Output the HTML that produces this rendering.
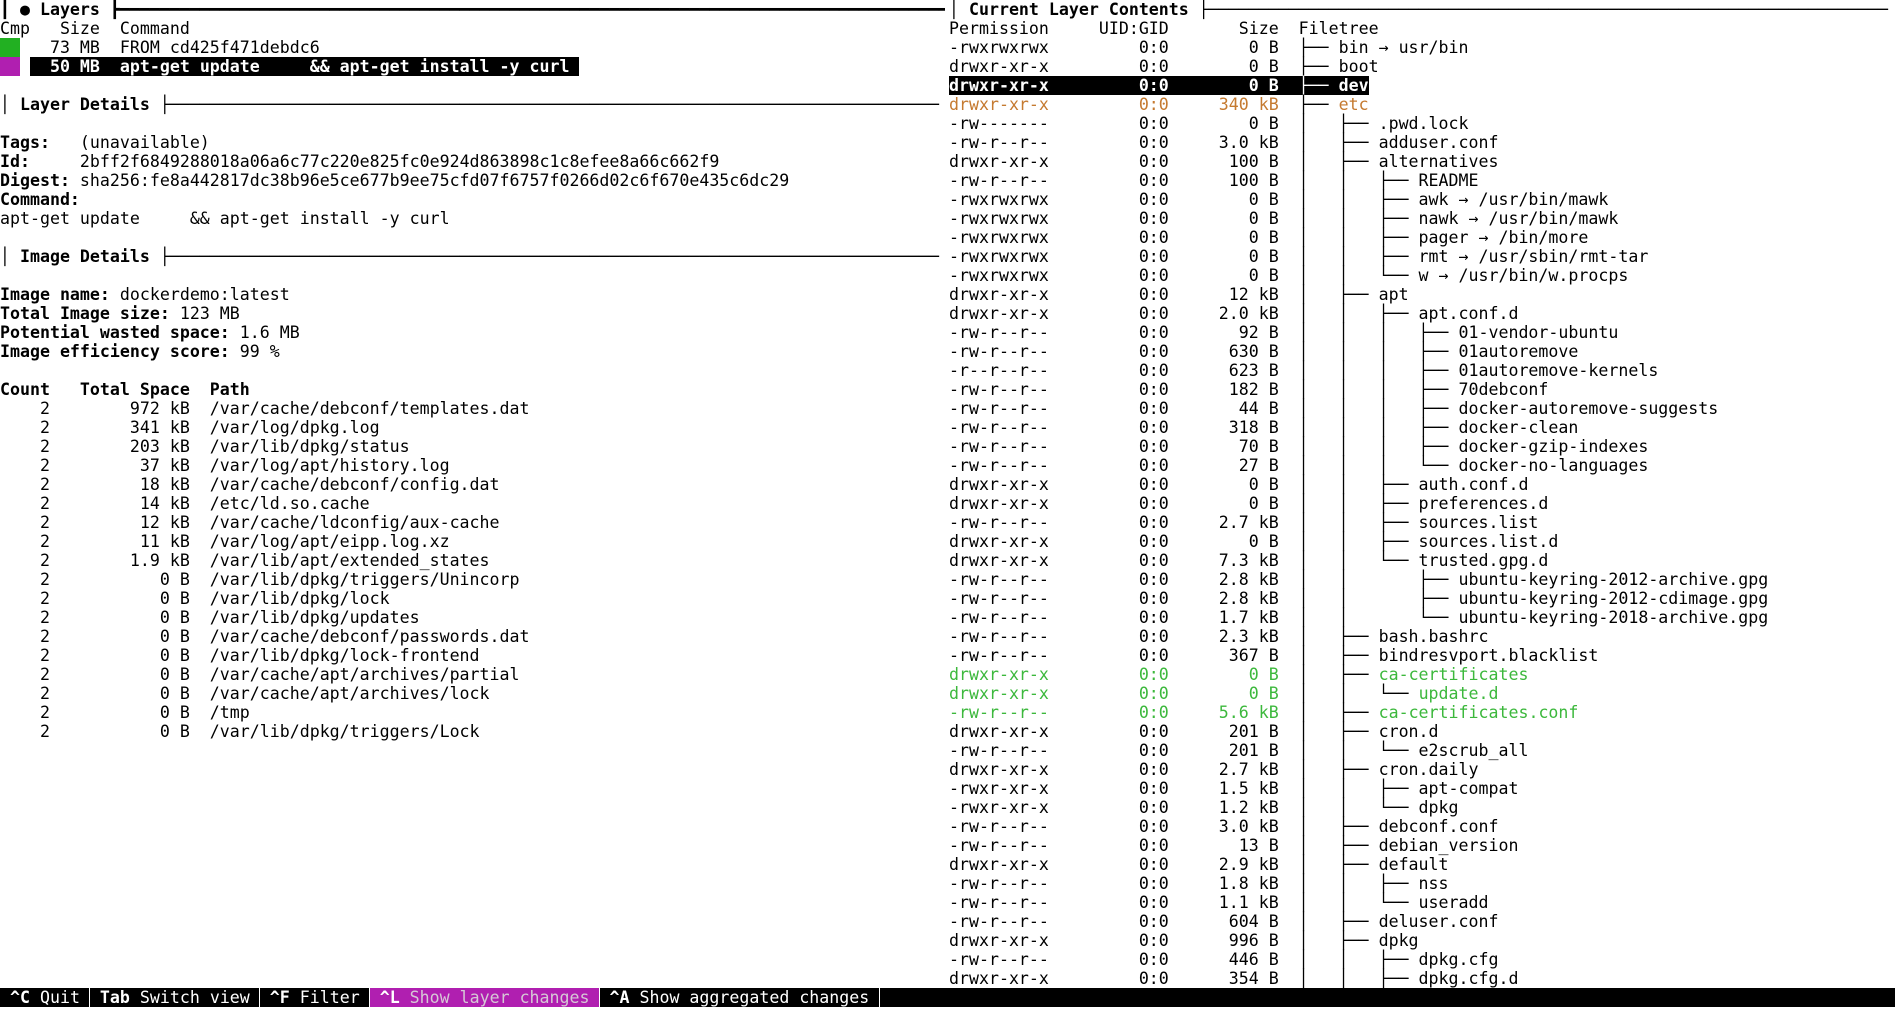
<!DOCTYPE html>
<html><head><meta charset="utf-8"><style>
html,body{margin:0;padding:0;background:#fff;}
body{width:1895px;height:1011px;overflow:hidden;position:relative;}
pre{margin:0;position:absolute;top:0;font-family:"DejaVu Sans Mono","Liberation Mono",monospace;font-size:16.6px;line-height:19px;color:#000;white-space:pre;overflow:hidden;}
#L{left:0;width:945px;}
#R{left:949px;width:946px;}
.g{background:#22b022;}
.m{background:#b01fb0;}
.sel{background:#000;color:#fff;font-weight:bold;}
.o{color:#c57a30;}
.gr{color:#3cb83c;}
#bar{position:absolute;left:0;top:988px;width:1895px;height:19px;background:#000;}
#bar pre{color:#fff;top:0;left:0;width:1895px;}
#bar .mg{background:#b01fb0;color:#d6c8d6;}
.sep{position:absolute;top:0;width:1px;height:19px;background:#fff;}
</style></head><body>
<pre id="L"><b>┃ ● Layers ┣━━━━━━━━━━━━━━━━━━━━━━━━━━━━━━━━━━━━━━━━━━━━━━━━━━━━━━━━━━━━━━━━━━━━━━━━━━━━━━━━━━━━━━━</b>
Cmp   Size  Command
<span class="g">  </span>   73 MB  FROM cd425f471debdc6
<span class="m">  </span> <span class="sel">  50 MB  apt-get update     &amp;&amp; apt-get install -y curl </span>

│ <b>Layer Details</b> ├─────────────────────────────────────────────────────────────────────────────

<b>Tags:</b>   (unavailable)
<b>Id:</b>     2bff2f6849288018a06a6c77c220e825fc0e924d863898c1c8efee8a66c662f9
<b>Digest:</b> sha256:fe8a442817dc38b96e5ce677b9ee75cfd07f6757f0266d02c6f670e435c6dc29
<b>Command:</b>
apt-get update     &amp;&amp; apt-get install -y curl

│ <b>Image Details</b> ├─────────────────────────────────────────────────────────────────────────────

<b>Image name:</b> dockerdemo:latest
<b>Total Image size:</b> 123 MB
<b>Potential wasted space:</b> 1.6 MB
<b>Image efficiency score:</b> 99 %

<b>Count   Total Space  Path</b>
    2        972 kB  /var/cache/debconf/templates.dat
    2        341 kB  /var/log/dpkg.log
    2        203 kB  /var/lib/dpkg/status
    2         37 kB  /var/log/apt/history.log
    2         18 kB  /var/cache/debconf/config.dat
    2         14 kB  /etc/ld.so.cache
    2         12 kB  /var/cache/ldconfig/aux-cache
    2         11 kB  /var/log/apt/eipp.log.xz
    2        1.9 kB  /var/lib/apt/extended_states
    2           0 B  /var/lib/dpkg/triggers/Unincorp
    2           0 B  /var/lib/dpkg/lock
    2           0 B  /var/lib/dpkg/updates
    2           0 B  /var/cache/debconf/passwords.dat
    2           0 B  /var/lib/dpkg/lock-frontend
    2           0 B  /var/cache/apt/archives/partial
    2           0 B  /var/cache/apt/archives/lock
    2           0 B  /tmp
    2           0 B  /var/lib/dpkg/triggers/Lock
</pre>
<pre id="R">│ <b>Current Layer Contents</b> ├────────────────────────────────────────────────────────────────────
Permission     UID:GID       Size  Filetree
-rwxrwxrwx         0:0        0 B  ├── bin → usr/bin
drwxr-xr-x         0:0        0 B  ├── boot
<span class="sel">drwxr-xr-x         0:0        0 B  ├── dev</span>
<span class="o">drwxr-xr-x         0:0     340 kB</span>  ├── <span class="o">etc</span>
-rw-------         0:0        0 B  │   ├── .pwd.lock
-rw-r--r--         0:0     3.0 kB  │   ├── adduser.conf
drwxr-xr-x         0:0      100 B  │   ├── alternatives
-rw-r--r--         0:0      100 B  │   │   ├── README
-rwxrwxrwx         0:0        0 B  │   │   ├── awk → /usr/bin/mawk
-rwxrwxrwx         0:0        0 B  │   │   ├── nawk → /usr/bin/mawk
-rwxrwxrwx         0:0        0 B  │   │   ├── pager → /bin/more
-rwxrwxrwx         0:0        0 B  │   │   ├── rmt → /usr/sbin/rmt-tar
-rwxrwxrwx         0:0        0 B  │   │   └── w → /usr/bin/w.procps
drwxr-xr-x         0:0      12 kB  │   ├── apt
drwxr-xr-x         0:0     2.0 kB  │   │   ├── apt.conf.d
-rw-r--r--         0:0       92 B  │   │   │   ├── 01-vendor-ubuntu
-rw-r--r--         0:0      630 B  │   │   │   ├── 01autoremove
-r--r--r--         0:0      623 B  │   │   │   ├── 01autoremove-kernels
-rw-r--r--         0:0      182 B  │   │   │   ├── 70debconf
-rw-r--r--         0:0       44 B  │   │   │   ├── docker-autoremove-suggests
-rw-r--r--         0:0      318 B  │   │   │   ├── docker-clean
-rw-r--r--         0:0       70 B  │   │   │   ├── docker-gzip-indexes
-rw-r--r--         0:0       27 B  │   │   │   └── docker-no-languages
drwxr-xr-x         0:0        0 B  │   │   ├── auth.conf.d
drwxr-xr-x         0:0        0 B  │   │   ├── preferences.d
-rw-r--r--         0:0     2.7 kB  │   │   ├── sources.list
drwxr-xr-x         0:0        0 B  │   │   ├── sources.list.d
drwxr-xr-x         0:0     7.3 kB  │   │   └── trusted.gpg.d
-rw-r--r--         0:0     2.8 kB  │   │       ├── ubuntu-keyring-2012-archive.gpg
-rw-r--r--         0:0     2.8 kB  │   │       ├── ubuntu-keyring-2012-cdimage.gpg
-rw-r--r--         0:0     1.7 kB  │   │       └── ubuntu-keyring-2018-archive.gpg
-rw-r--r--         0:0     2.3 kB  │   ├── bash.bashrc
-rw-r--r--         0:0      367 B  │   ├── bindresvport.blacklist
<span class="gr">drwxr-xr-x         0:0        0 B</span>  │   ├── <span class="gr">ca-certificates</span>
<span class="gr">drwxr-xr-x         0:0        0 B</span>  │   │   └── <span class="gr">update.d</span>
<span class="gr">-rw-r--r--         0:0     5.6 kB</span>  │   ├── <span class="gr">ca-certificates.conf</span>
drwxr-xr-x         0:0      201 B  │   ├── cron.d
-rw-r--r--         0:0      201 B  │   │   └── e2scrub_all
drwxr-xr-x         0:0     2.7 kB  │   ├── cron.daily
-rwxr-xr-x         0:0     1.5 kB  │   │   ├── apt-compat
-rwxr-xr-x         0:0     1.2 kB  │   │   └── dpkg
-rw-r--r--         0:0     3.0 kB  │   ├── debconf.conf
-rw-r--r--         0:0       13 B  │   ├── debian_version
drwxr-xr-x         0:0     2.9 kB  │   ├── default
-rw-r--r--         0:0     1.8 kB  │   │   ├── nss
-rw-r--r--         0:0     1.1 kB  │   │   └── useradd
-rw-r--r--         0:0      604 B  │   ├── deluser.conf
drwxr-xr-x         0:0      996 B  │   ├── dpkg
-rw-r--r--         0:0      446 B  │   │   ├── dpkg.cfg
drwxr-xr-x         0:0      354 B  │   │   ├── dpkg.cfg.d
</pre>
<div id="bar"><pre> <b>^C</b> Quit  <b>Tab</b> Switch view  <b>^F</b> Filter <span class="mg"> <b style="color:#fff">^L</b> Show layer changes </span> <b>^A</b> Show aggregated changes </pre>
<div class="sep" style="left:89px"></div><div class="sep" style="left:259px"></div><div class="sep" style="left:369px"></div><div class="sep" style="left:599px"></div><div class="sep" style="left:879px"></div>
</div>
</body></html>
